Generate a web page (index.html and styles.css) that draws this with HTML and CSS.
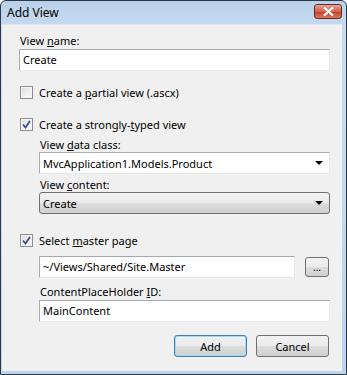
FILE: index.html
```html
<!DOCTYPE html>
<html lang="en">

<head>
    <meta charset="UTF-8">
    <meta name="viewport" content="width=device-width, initial-scale=1.0">
    <title>Add View</title>
    <link rel="stylesheet" href="styles.css">
</head>

<body>
    <div class="window">
        <div class="titlebar">
            <span class="title">Add View</span>
            <button class="close">
                <svg width="11" height="9" viewBox="0 0 11 9"><path d="M1 0.5 L10 8.5 M10 0.5 L1 8.5" stroke="#fff" stroke-width="2.2"/></svg>
            </button>
        </div>

        <div class="client">
            <label class="label">View <u>n</u>ame:</label>
            <div class="textbox">Create</div>

            <div class="check check-first">
                <span class="box"></span>
                <span>Create a <u>p</u>artial view (.ascx)</span>
            </div>

            <div class="check check-second">
                <span class="box checked">
                    <svg width="9" height="9" viewBox="0 0 9 9"><path d="M1 4.5 L3.5 7.5 L8 1" fill="none" stroke="#3a4f8a" stroke-width="1.8"/></svg>
                </span>
                <span>Create a strongly-<u>t</u>yped view</span>
            </div>

            <div class="group">
                <label class="label">View <u>d</u>ata class:</label>
                <div class="combo">
                    <span>MvcApplication1.Models.Product</span>
                    <span class="arrow"></span>
                </div>
                <label class="label label-gap">View <u>c</u>ontent:</label>
                <div class="combo combo-button">
                    <span>Create</span>
                    <span class="arrow"></span>
                </div>
            </div>

            <div class="check check-third">
                <span class="box checked">
                    <svg width="9" height="9" viewBox="0 0 9 9"><path d="M1 4.5 L3.5 7.5 L8 1" fill="none" stroke="#3a4f8a" stroke-width="1.8"/></svg>
                </span>
                <span>Select <u>m</u>aster page</span>
            </div>

            <div class="group">
                <div class="row">
                    <div class="textbox grow">~/Views/Shared/Site.Master</div>
                    <button class="btn browse">...</button>
                </div>
                <label class="label label-wide">ContentPlaceHolder <u>I</u>D:</label>
                <div class="textbox">MainContent</div>
            </div>

            <div class="actions">
                <button class="btn default">Add</button>
                <button class="btn">Cancel</button>
            </div>
        </div>
    </div>
</body>

</html>
```

FILE: styles.css
```css
/* Fenetre de dialogue style Windows 7 basic */
body {
    margin: 0;
    font-family: "Noto Sans", "Open Sans", sans-serif;
    font-size: 11px;
    color: #000;
}
.window {
    width: 347px;
    height: 375px;
    box-sizing: border-box;
    border: 1px solid #2e3a48;
    border-radius: 6px 6px 0 0;
    background: linear-gradient(#b9d1ea, #c9dcf0 30px, #bcd4ee);
    display: flex;
    flex-direction: column;
}
.titlebar {
    height: 23px;
    display: flex;
    align-items: center;
    justify-content: space-between;
    padding: 0 4px 0 6px;
}
.title {
    font-size: 12px;
    color: #000;
}
.close {
    width: 28px;
    height: 15px;
    margin-top: -2px;
    border: 1px solid #6e2a22;
    border-radius: 3px;
    background: linear-gradient(#e4a596, #d0624e 50%, #c43c28 51%, #d8785e);
    display: flex;
    align-items: center;
    justify-content: center;
    padding: 0;
}
.client {
    flex: 1;
    margin: 0 4px 3px 1px;
    background: #f0f0f0;
    border-top: 1px solid #dfe8f2;
    padding: 8px 12px 0 17px;
    display: flex;
    flex-direction: column;
}
.label {
    display: block;
    line-height: 15px;
    height: 15px;
    margin-left: 1px;
}
.label-gap {
    margin-top: 3px;
}
.label-wide {
    margin-top: 6px;
}
.textbox {
    height: 22px;
    box-sizing: border-box;
    border: 1px solid #abadb3;
    border-top-color: #a4a8b0;
    border-right-color: #e3e9ef;
    border-bottom-color: #e3e9ef;
    background: #fff;
    padding: 0 3px;
    line-height: 20px;
    margin-top: 1px;
}
.check {
    display: flex;
    align-items: center;
    gap: 6px;
    height: 15px;
    margin-left: 1px;
}
.check-first {
    margin-top: 14px;
}
.check-second {
    margin-top: 17px;
}
.check-third {
    margin-top: 19px;
}
.box {
    width: 13px;
    height: 13px;
    box-sizing: border-box;
    border: 1px solid #8e8f8f;
    background: linear-gradient(135deg, #dcdcdc, #fefefe);
    box-shadow: inset 0 0 0 1px #f4f4f4;
    display: flex;
    align-items: center;
    justify-content: center;
}
.group {
    margin-left: 20px;
    display: flex;
    flex-direction: column;
}
.check-second + .group {
    margin-top: 5px;
}
.check-third + .group {
    margin-top: 8px;
}
.combo {
    height: 22px;
    box-sizing: border-box;
    border: 1px solid #abadb3;
    border-right-color: #e3e9ef;
    border-bottom-color: #e3e9ef;
    background: #fff;
    padding: 0 3px;
    display: flex;
    align-items: center;
    justify-content: space-between;
    margin-top: 0;
}
.combo-button {
    border: 1px solid #707070;
    border-radius: 3px;
    background: linear-gradient(#f2f2f2, #ebebeb 50%, #dddddd 51%, #cfcfcf);
}
.arrow {
    width: 0;
    height: 0;
    border-left: 4px solid transparent;
    border-right: 4px solid transparent;
    border-top: 4px solid #000;
    margin-right: 3px;
}
.row {
    display: flex;
    align-items: center;
    gap: 10px;
}
.grow {
    flex: 1;
    margin-top: 0;
}
.btn {
    font-family: inherit;
    font-size: 11px;
    height: 22px;
    border: 1px solid #707070;
    border-radius: 3px;
    background: linear-gradient(#f2f2f2, #ebebeb 50%, #dddddd 51%, #cfcfcf);
    padding: 0;
    color: #000;
}
.browse {
    width: 24px;
    height: 20px;
    font-size: 10px;
    line-height: 14px;
    margin-right: 1px;
}
.actions {
    display: flex;
    justify-content: flex-end;
    gap: 9px;
    margin-top: 13px;
    margin-right: 1px;
}
.actions .btn {
    width: 73px;
}
.default {
    border-color: #3c7fb1;
    box-shadow: inset 0 0 0 1px #9fd8f8;
}
```
